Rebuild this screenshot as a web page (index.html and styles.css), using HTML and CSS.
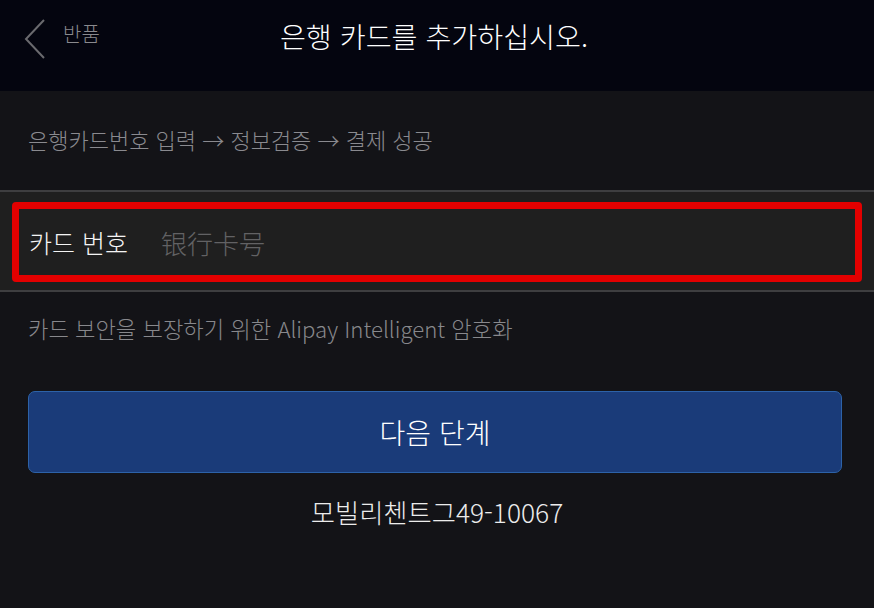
FILE: index.html
```html
<!DOCTYPE html>
<html lang="ko">
<head>
<meta charset="utf-8">
<link rel="stylesheet" href="styles.css">
</head>
<body>
<div class="page">
  <header class="topbar">
    <div class="back">
      <svg class="chev" width="24" height="42" viewBox="0 0 24 42"><path d="M21 2 L3 21 L21 40" fill="none" stroke="#6a6a6e" stroke-width="2"/></svg>
      <span class="back-label">반품</span>
    </div>
    <h1 class="title">은행 카드를 추가하십시오.</h1>
  </header>
  <div class="steps">은행카드번호 입력 → 정보검증 → 결제 성공</div>
  <div class="input-row">
    <div class="field">
      <span class="label">카드 번호</span>
      <span class="placeholder">银行卡号</span>
    </div>
  </div>
  <div class="note">카드 보안을 보장하기 위한 Alipay Intelligent 암호화</div>
  <div class="btn-wrap"><button class="next">다음 단계</button></div>
  <div class="code">모빌리첸트그49-10067</div>
</div>
</body>
</html>
```
FILE: styles.css
```css
html, body {
  margin: 0;
  padding: 0;
  background: #131317;
}
body {
  font-family: "Noto Sans CJK KR", "Noto Sans", sans-serif;
  font-weight: 300;
  width: 874px;
  height: 608px;
  overflow: hidden;
}
.topbar {
  height: 91px;
  background: #04050f;
  position: relative;
  display: flex;
  align-items: flex-start;
  justify-content: center;
}
.back {
  position: absolute;
  left: 23px;
  top: 18px;
  display: flex;
  align-items: flex-start;
}
.chev { display: block; }
.back-label {
  margin-left: 16px;
  margin-top: 2px;
  font-size: 20px;
  line-height: 28px;
  color: #8a8a8e;
}
.title {
  margin: 16px 0 0 0;
  padding-right: 6px;
  font-weight: 300;
  font-size: 28.2px;
  line-height: 40px;
  color: #ffffff;
}
.steps {
  height: 99px;
  box-sizing: border-box;
  padding: 33px 0 0 28px;
  font-size: 22px;
  line-height: 30px;
  color: #8a8a8f;
}
.input-row {
  border-top: 2px solid #3e3e40;
  border-bottom: 2px solid #3e3e40;
  background: #1f1f1f;
  padding: 10px 12px 8px 12px;
}
.field {
  border: 7px solid #e30000;
  border-radius: 4px;
  height: 66px;
  display: flex;
  align-items: center;
  padding-left: 10px;
}
.label {
  font-size: 25px;
  font-weight: 300;
  color: #f4f4f4;
}
.placeholder {
  margin-left: 33px;
  font-size: 26px;
  color: #626264;
}
.note {
  padding: 21px 0 0 28px;
  height: 76px;
  box-sizing: border-box;
  font-size: 22.2px;
  line-height: 30px;
  color: #88888c;
}
.btn-wrap {
  padding: 23px 32px 0 28px;
}
.next {
  display: block;
  width: 100%;
  height: 82px;
  background: #1a3b79;
  border: 1px solid #2d62a8;
  border-radius: 7px;
  color: #ffffff;
  font-family: "Noto Sans CJK KR", sans-serif;
  font-weight: 300;
  font-size: 28px;
  padding: 0;
}
.code {
  margin-top: 21px;
  text-align: center;
  font-size: 26.3px;
  line-height: 36px;
  color: #ececec;
}
```
